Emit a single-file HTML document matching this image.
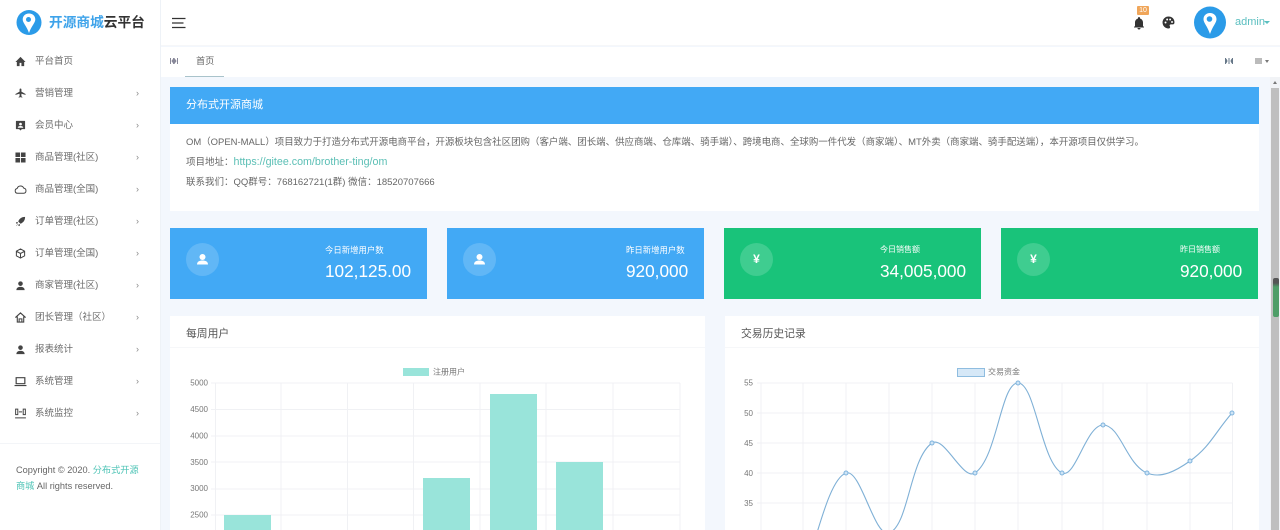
<!DOCTYPE html>
<html lang="zh"><head><meta charset="utf-8"><title>开源商城云平台</title>
<style>
*{margin:0;padding:0;box-sizing:border-box}
html,body{width:1280px;height:530px;overflow:hidden;background:#f3f7fd;font-family:"Liberation Sans","Noto Sans CJK SC",sans-serif;color:#666}
.a{position:absolute;white-space:nowrap}
#side{position:absolute;left:0;top:0;width:161px;height:530px;background:#fff;border-right:1px solid #eef2f7}
.m{position:absolute;left:35px;margin-top:1px;font-size:9.5px;line-height:14px;color:#6b6b6b}
.ar{position:absolute;left:136px;font-size:9px;line-height:12px;color:#888}
.ic{position:absolute;left:15px;width:11px;height:11px;margin-top:1px}
.stat{position:absolute;top:228px;width:257px;height:71px;background:#42a9f5}
.g{background:#19c37a}
.c{position:absolute;left:16px;top:15px;width:33px;height:33px;border-radius:50%;background:rgba(255,255,255,.17)}
.lb{position:absolute;font-size:8.4px;color:#fff;top:16px;line-height:12px;white-space:nowrap}
.g .lb{font-size:8px}
.v{position:absolute;font-size:17.2px;color:#fff;top:32px;line-height:22px;white-space:nowrap}
.p{position:absolute;top:316px;height:214px;background:#fff}
.t{position:absolute;left:16px;top:10px;margin-top:1px;font-size:10.8px;line-height:14px;color:#555;white-space:nowrap}
.ln{position:absolute;left:0;right:0;top:31px;height:1px;background:#f6f7f9}
.yl{font-size:8px;fill:#777;font-family:"Liberation Sans",sans-serif}
</style></head><body>

<div id="side">
<svg class="a" style="left:13px;top:6px" width="32" height="33" viewBox="0 0 32 33"><circle cx="16" cy="16.500" r="12.500" fill="#2b9be8"/><path d="M16 7.500c-3.900 0-6.300 2.700-6.300 6 0 3.300 3.900 6.400 6.300 13.500 2.400-7.100 6.300-10.200 6.300-13.500 0-3.300-2.400-6-6.300-6z" fill="#fff"/><circle cx="15.500" cy="13.500" r="2.500" fill="#2b9be8"/></svg>
<div class="a" style="left:49px;top:14px;font-size:13.700px;font-weight:700;line-height:18px;color:#3ea3ea">开源商城<span style="color:#333">云平台</span></div>

<svg class="ic" style="top:55px" viewBox="0 0 24 24"><path d="M10 22v-7h4v7h6v-9h3L12 2 1 13h3v9z" fill="#444"/></svg><div class="m" style="top:54px">平台首页</div>

<svg class="ic" style="top:87px" viewBox="0 0 24 24"><path d="M23 15v-2l-9-5V3a2 2 0 0 0-4 0v5l-9 5v2l9-2.500V18l-2 1.500V21l4-1 4 1v-1.500L14 18v-5.500z" fill="#444"/></svg><div class="m" style="top:86px">营销管理</div><div class="ar" style="top:87px">›</div>

<svg class="ic" style="top:119px" viewBox="0 0 24 24"><path d="M3 2h18a1 1 0 0 1 1 1v16a1 1 0 0 1-1 1h-6l-3 3-3-3H3a1 1 0 0 1-1-1V3a1 1 0 0 1 1-1z" fill="#444"/><circle cx="12" cy="9" r="3" fill="#fff"/><path d="M6 17c0-3 3-4 6-4s6 1 6 4z" fill="#fff"/></svg><div class="m" style="top:118px">会员中心</div><div class="ar" style="top:119px">›</div>

<svg class="ic" style="top:151px" viewBox="0 0 24 24"><path d="M1 1h10v10H1zM13 1h10v10H13zM1 13h10v10H1zM13 13h10v10H13z" fill="#444"/></svg><div class="m" style="top:150px">商品管理(社区)</div><div class="ar" style="top:151px">›</div>

<svg class="ic" style="left:14px;width:13px;height:13px;top:182px" viewBox="0 0 24 24"><path d="M6.500 19a4.500 4.500 0 0 1-.7-8.900A6.500 6.500 0 0 1 18 9.500a4.800 4.800 0 0 1 0 9.500z" fill="none" stroke="#444" stroke-width="1.800"/></svg><div class="m" style="top:182px">商品管理(全国)</div><div class="ar" style="top:183px">›</div>

<svg class="ic" style="top:215px" viewBox="0 0 24 24"><path d="M22 2c-7 0-12 3-15 10l5 5c7-3 10-8 10-15zM6 13l-4 1 1 3 3-1zM11 18l-1 4-3-1 1-3zM5 18l1 1-4 3z" fill="#444"/></svg><div class="m" style="top:214px">订单管理(社区)</div><div class="ar" style="top:215px">›</div>

<svg class="ic" style="top:247px" viewBox="0 0 24 24"><path d="M12 2l9 5v10l-9 5-9-5V7zM3 7l9 5 9-5M12 12v10" fill="none" stroke="#444" stroke-width="2.200"/></svg><div class="m" style="top:246px">订单管理(全国)</div><div class="ar" style="top:247px">›</div>

<svg class="ic" style="top:279px" viewBox="0 0 24 24"><circle cx="12" cy="8" r="5" fill="#444"/><path d="M3 22c0-5 4-7 9-7s9 2 9 7z" fill="#444"/></svg><div class="m" style="top:278px">商家管理(社区)</div><div class="ar" style="top:279px">›</div>

<svg class="ic" style="top:311px" viewBox="0 0 24 24"><path d="M12 2l10 9h-3v11H5V11H2zM9 15h6v7H9z" fill="none" stroke="#444" stroke-width="2.400"/></svg><div class="m" style="top:310px">团长管理（社区）</div><div class="ar" style="top:311px">›</div>

<svg class="ic" style="top:343px" viewBox="0 0 24 24"><circle cx="12" cy="8" r="5" fill="#444"/><path d="M3 22c0-5 4-7 9-7s9 2 9 7z" fill="#444"/></svg><div class="m" style="top:342px">报表统计</div><div class="ar" style="top:343px">›</div>

<svg class="ic" style="left:14px;width:13px;height:13px;top:374px" viewBox="0 0 24 24"><path d="M4 5h16v11H4zM1 19.500h22" fill="none" stroke="#444" stroke-width="2.200"/></svg><div class="m" style="top:374px">系统管理</div><div class="ar" style="top:375px">›</div>

<svg class="ic" style="left:14px;width:13px;height:13px;top:406px" viewBox="0 0 24 24"><path d="M3 4h4v10H3zM17 4h4v10h-4zM9 9h6M2 20h20" fill="none" stroke="#444" stroke-width="1.800"/></svg><div class="m" style="top:406px">系统监控</div><div class="ar" style="top:407px">›</div>

<div class="a" style="left:0;top:443px;width:160px;height:1px;background:#f3f5f8"></div>
<div class="a" style="left:16px;top:463px;font-size:9.200px;line-height:15.500px;color:#666;white-space:normal;width:128px">Copyright © 2020. <span style="color:#4cc3b5">分布式开源商城</span> All rights reserved.</div>
</div>

<!-- top bar -->
<div class="a" style="left:161px;top:0;width:1119px;height:46px;background:#fff;border-bottom:1px solid #f6f7f9"></div>
<svg class="a" style="left:171px;top:16px" width="16" height="14" viewBox="0 0 16 14"><path d="M1 2.500h13.500M1 7h11.500M1 11.500h13.500" stroke="#333" stroke-width="1.300"/></svg>
<div class="a" style="left:1137px;top:6px;width:12px;height:9px;background:#f0a65a;border-radius:1px;color:#fff;font-size:7px;line-height:9px;text-align:center">10</div>
<svg class="a" style="left:1133px;top:17px" width="12" height="13" viewBox="0 0 24 26"><path d="M12 25a3 3 0 0 0 3-3H9a3 3 0 0 0 3 3zM20 18v-7c0-4-2.500-7-6-8V2a2 2 0 0 0-4 0v1c-3.500 1-6 4-6 8v7l-2 2v1h20v-1z" fill="#333"/></svg>
<svg class="a" style="left:1162px;top:16px" width="13" height="13" viewBox="0 0 24 24"><path d="M12 1a11 11 0 0 0 0 22c2 0 3-1 3-2.500 0-1.500-1-2-1-3s1-2 2.500-2H20c2 0 3-1.500 3-4C23 5 18 1 12 1z" fill="#333"/><circle cx="6.500" cy="12" r="1.800" fill="#fff"/><circle cx="9.500" cy="6.500" r="1.800" fill="#fff"/><circle cx="15" cy="6.500" r="1.800" fill="#fff"/><circle cx="18.500" cy="11" r="1.800" fill="#fff"/></svg>
<svg class="a" style="left:1194px;top:6px" width="32" height="33" viewBox="0 0 32 33"><circle cx="16" cy="16.500" r="16" fill="#2b9be8"/><path d="M16 7c-4 0-6.500 2.800-6.500 6.200 0 3.600 4 7 6.500 14.800 2.500-7.800 6.500-11.200 6.500-14.800C22.500 9.800 20 7 16 7z" fill="#fff"/><circle cx="15.500" cy="13" r="2.800" fill="#2b9be8"/></svg>
<div class="a" style="left:1235px;top:15px;font-size:11px;line-height:14px;color:#5bbfc0">admin</div>
<div class="a" style="left:1264px;top:21px;border:3px solid transparent;border-top:3px solid #5bbfc0;border-bottom:0"></div>

<!-- tab bar -->
<div class="a" style="left:161px;top:47px;width:1119px;height:30px;background:#fff"></div>
<svg class="a" style="left:170px;top:58px" width="8" height="6" viewBox="0 0 8 6"><path d="M.5 0v6M7.500 0v6M3.500 0v6M2 3l1.500-2v4zM6 3L4.500 1v4z" stroke="#889" fill="#889" stroke-width="1"/></svg>
<div class="a" style="left:196px;top:54px;font-size:9.200px;line-height:14px;color:#666">首页</div>
<div class="a" style="left:185px;top:76px;width:39px;height:1px;background:#a9c3cb"></div>
<svg class="a" style="left:1225px;top:58px" width="8" height="6" viewBox="0 0 8 6"><path d="M.5 0v6M7.500 0v6M4 0v6M2 3L1 1v4zM6 3l1-2v4z" stroke="#678" fill="#678" stroke-width="1"/></svg>
<div class="a" style="left:1255px;top:58px;width:7px;height:6px;background:#bbb"></div>
<div class="a" style="left:1265px;top:60px;border:2.500px solid transparent;border-top:3px solid #777;border-bottom:0"></div>

<!-- banner -->
<div class="a" style="left:170px;top:87px;width:1089px;height:37px;background:#42a9f5"></div>
<div class="a" style="left:186px;top:98px;font-size:11px;line-height:15px;color:#fff">分布式开源商城</div>
<div class="a" style="left:170px;top:124px;width:1089px;height:87px;background:#fff"></div>
<div class="a" style="left:186px;top:136px;font-size:9.460px;line-height:14px;color:#666">OM（OPEN-MALL）项目致力于打造分布式开源电商平台，开源板块包含社区团购（客户端、团长端、供应商端、仓库端、骑手端）、跨境电商、全球购一件代发（商家端）、MT外卖（商家端、骑手配送端），本开源项目仅供学习。</div>
<div class="a" style="left:186px;top:155px;font-size:9.500px;line-height:14px;color:#666">项目地址：<span style="color:#5bbfb5;font-size:10.700px">https://gitee.com/brother-ting/om</span></div>
<div class="a" style="left:186px;top:176px;font-size:9.500px;line-height:14px;color:#666">联系我们：QQ群号：768162721(1群) 微信：18520707666</div>

<!-- stats -->
<div class="stat" style="left:170px"><div class="c"><svg width="33" height="33" viewBox="0 0 33 33"><circle cx="16.500" cy="14" r="3" fill="#fff"/><path d="M11 21.500c0-3 2.500-4 5.500-4s5.500 1 5.500 4z" fill="#fff"/></svg></div><div class="lb" style="left:155px">今日新增用户数</div><div class="v" style="left:155px">102,125.00</div></div>
<div class="stat" style="left:447px"><div class="c"><svg width="33" height="33" viewBox="0 0 33 33"><circle cx="16.500" cy="14" r="3" fill="#fff"/><path d="M11 21.500c0-3 2.500-4 5.500-4s5.500 1 5.500 4z" fill="#fff"/></svg></div><div class="lb" style="left:179px">昨日新增用户数</div><div class="v" style="left:179px">920,000</div></div>
<div class="stat g" style="left:724px"><div class="c"><div style="text-align:center;color:#fff;font-size:12px;font-weight:700;line-height:33px">¥</div></div><div class="lb" style="left:156px">今日销售额</div><div class="v" style="left:156px">34,005,000</div></div>
<div class="stat g" style="left:1001px"><div class="c"><div style="text-align:center;color:#fff;font-size:12px;font-weight:700;line-height:33px">¥</div></div><div class="lb" style="left:179px">昨日销售额</div><div class="v" style="left:179px">920,000</div></div>

<!-- left panel -->
<div class="p" style="left:170px;width:535px"><div class="t">每周用户</div><div class="ln"></div></div>
<svg class="a" style="left:170px;top:316px" width="535" height="214" viewBox="170 316 535 214">
<path d="M211 383H680M211 409.500H680M211 436H680M211 462H680M211 489H680M211 515H680M215.500 383V530M281 383V530M347.500 383V530M413.500 383V530M480 383V530M546 383V530M613 383V530M680 383V530" stroke="#f0f1f4" stroke-width="1" fill="none"/>
<rect x="224" y="515" width="47" height="15" fill="#99e4da"/><rect x="423" y="478" width="47" height="52" fill="#99e4da"/><rect x="490" y="394" width="47" height="136" fill="#99e4da"/><rect x="556" y="462" width="47" height="68" fill="#99e4da"/>
<rect x="403" y="368" width="26" height="8" fill="#99e4da"/>
<text x="433" y="374.500" class="yl" style="font-family:'Liberation Sans','Noto Sans CJK SC',sans-serif">注册用户</text>
<g text-anchor="end"><text class="yl" x="208" y="385.500">5000</text><text class="yl" x="208" y="412">4500</text><text class="yl" x="208" y="438.500">4000</text><text class="yl" x="208" y="465">3500</text><text class="yl" x="208" y="491">3000</text><text class="yl" x="208" y="517.500">2500</text></g>
</svg>

<!-- right panel -->
<div class="p" style="left:725px;width:534px"><div class="t">交易历史记录</div><div class="ln"></div></div>
<svg class="a" style="left:725px;top:316px" width="534" height="214" viewBox="725 316 534 214">
<path d="M757 383H1232.500M757 413H1232.500M757 443H1232.500M757 473H1232.500M757 503H1232.500M761 383V530M803 383V530M846 383V530M889 383V530M932 383V530M975 383V530M1018 383V530M1062 383V530M1103 383V530M1147 383V530M1190 383V530M1232.500 383V530" stroke="#f0f1f4" stroke-width="1" fill="none"/>
<path d="M803 570C813 560 826.200 479.900 846 473C860.600 467.900 874.400 538.100 889 533C908.800 526.100 909.500 458.700 932 443C943.900 434.700 963.100 481.300 975 473C997.500 457.300 1000.600 383 1018 383C1035.400 383 1041.100 462.700 1062 473C1075.100 479.500 1086.300 425 1103 425C1120.300 425 1126.400 464.500 1147 473C1161.200 478.900 1176 470.900 1190 461C1210 446.900 1215.200 432.200 1232 413" fill="none" stroke="#7fb0d6" stroke-width="1.100"/>
<g fill="#cfe4f5" stroke="#7fb4de" stroke-width="1"><circle cx="846" cy="473" r="2"/><circle cx="932" cy="443" r="2"/><circle cx="975" cy="473" r="2"/><circle cx="1018" cy="383" r="2"/><circle cx="1062" cy="473" r="2"/><circle cx="1103" cy="425" r="2"/><circle cx="1147" cy="473" r="2"/><circle cx="1190" cy="461" r="2"/><circle cx="1232" cy="413" r="2"/></g>
<rect x="957.500" y="368.500" width="27" height="8" fill="#d6e8f7" stroke="#8fbde0"/>
<text x="988" y="374.500" class="yl" style="font-family:'Liberation Sans','Noto Sans CJK SC',sans-serif">交易资金</text>
<g text-anchor="end"><text class="yl" x="753" y="385.500">55</text><text class="yl" x="753" y="416">50</text><text class="yl" x="753" y="446">45</text><text class="yl" x="753" y="476">40</text><text class="yl" x="753" y="506">35</text></g>
</svg>

<!-- scrollbar -->
<div class="a" style="left:1270px;top:77px;width:10px;height:453px;background:#f1f3f6"></div>
<div class="a" style="left:1271px;top:88px;width:8px;height:442px;background:#bfbfbf"></div>
<div class="a" style="left:1273px;top:278px;width:6px;height:39px;background:linear-gradient(#555 0,#555 5px,#4f9e68 9px,#4f9e68 100%);border-radius:2px"></div>
<div class="a" style="left:1273px;top:81px;border:2.500px solid transparent;border-bottom:3px solid #777;border-top:0"></div>
</body></html>
